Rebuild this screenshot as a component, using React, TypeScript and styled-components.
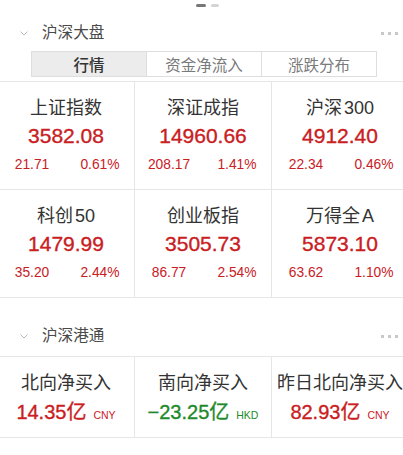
import React from "react";
import styled, { createGlobalStyle } from "styled-components";

const Global = createGlobalStyle`
  html, body { margin: 0; padding: 0; background: #fff; }
  body { font-family: "Liberation Sans", "Noto Sans CJK SC", sans-serif; overflow: hidden; }
`;

const RED = "#c9201f";
const GREEN = "#1e8a2b";

const Page = styled.div`
  width: 403px;
  height: 455px;
  overflow: hidden;
  background: #fff;
`;

const Pager = styled.div`
  height: 20px;
  display: flex;
  justify-content: center;
  align-items: flex-start;
  gap: 5px;
  padding-top: 4px;
  box-sizing: border-box;
  padding-left: 12px;
`;

const PagerDot = styled.span<{ $active?: boolean }>`
  display: block;
  width: ${(p) => (p.$active ? 10 : 8)}px;
  height: 3px;
  border-radius: 2px;
  background: ${(p) => (p.$active ? "#777" : "#d4d4d4")};
`;

const Header = styled.div<{ $top: number }>`
  margin-top: ${(p) => p.$top}px;
  height: 26px;
  display: flex;
  align-items: center;
  padding: 0 5px 0 20px;
`;

const Chevron = styled.svg`
  width: 8px;
  height: 5px;
  margin-right: 14px;
  flex: none;
`;

const Title = styled.div`
  font-size: 15.6px;
  color: #4a4a4a;
  flex: 1;
  line-height: 26px;
`;

const More = styled.div`
  display: flex;
  gap: 4px;
  align-items: center;
`;

const MoreDot = styled.span`
  width: 3px;
  height: 3px;
  background: #c8c8c8;
  display: block;
`;

const Tabs = styled.div`
  margin: 5px 0 0 31px;
  width: 346px;
  height: 26px;
  display: flex;
  border: 1px solid #dedede;
  box-sizing: border-box;
`;

const Tab = styled.div<{ $active?: boolean }>`
  flex: 1;
  display: flex;
  align-items: center;
  justify-content: center;
  font-size: 15.5px;
  color: ${(p) => (p.$active ? "#333" : "#7a7a7a")};
  font-weight: ${(p) => (p.$active ? 500 : 400)};
  background: ${(p) => (p.$active ? "#ececec" : "#fff")};
  & + & { border-left: 1px solid #dedede; }
`;

const Grid = styled.div<{ $top: number }>`
  margin-top: ${(p) => p.$top}px;
  margin-left: -2px;
  width: 411px;
  display: grid;
  grid-template-columns: repeat(3, 137px);
  border-top: 1px solid #e6e6e6;
`;

const Cell = styled.div<{ $pb: number }>`
  border-right: 1px solid #e6e6e6;
  border-bottom: 1px solid #e6e6e6;
  padding: 14px 0 ${(p) => p.$pb}px;
  display: flex;
  flex-direction: column;
  align-items: center;
  min-width: 0;
`;

const Name = styled.div`
  font-size: 18px;
  line-height: 24px;
  color: #333;
  white-space: nowrap;
`;

const Value = styled.div<{ $size: number; $color: string; $mt: number }>`
  font-size: ${(p) => p.$size}px;
  line-height: 26px;
  color: ${(p) => p.$color};
  -webkit-text-stroke: 0.35px ${(p) => p.$color};
  margin-top: ${(p) => p.$mt}px;
  white-space: nowrap;
  display: flex;
  align-items: baseline;
`;

const Unit = styled.span`
  font-size: 10.5px;
  margin-left: 7px;
  -webkit-text-stroke: 0;
`;

const Changes = styled.div`
  margin-top: 7px;
  width: 100%;
  display: grid;
  grid-template-columns: 1fr 1fr;
  font-size: 13.8px;
  line-height: 18px;
  color: ${RED};
  text-align: center;
`;

const indices = [
  { name: "上证指数", value: "3582.08", ch: "21.71", pct: "0.61%" },
  { name: "深证成指", value: "14960.66", ch: "208.17", pct: "1.41%" },
  { name: "沪深300", value: "4912.40", ch: "22.34", pct: "0.46%" },
  { name: "科创50", value: "1479.99", ch: "35.20", pct: "2.44%" },
  { name: "创业板指", value: "3505.73", ch: "86.77", pct: "2.54%" },
  { name: "万得全A", value: "5873.10", ch: "63.62", pct: "1.10%" },
];

const flows = [
  { name: "北向净买入", value: "14.35亿", unit: "CNY", color: RED },
  { name: "南向净买入", value: "−23.25亿", unit: "HKD", color: GREEN },
  { name: "昨日北向净买入", value: "82.93亿", unit: "CNY", color: RED },
];

function SectionHeader({ title, top }: { title: string; top: number }) {
  return (
    <Header $top={top}>
      <Chevron viewBox="0 0 8 5">
        <polyline points="0.5,0.5 4,4 7.5,0.5" fill="none" stroke="#bdbdbd" strokeWidth="1" />
      </Chevron>
      <Title>{title}</Title>
      <More>
        <MoreDot />
        <MoreDot />
        <MoreDot />
      </More>
    </Header>
  );
}

const Latin = styled.span`
  margin-left: 2px;
`;

function splitName(n: string) {
  const m = n.match(/^(.*?)([0-9A-Z]+)$/);
  if (!m) return n;
  return (
    <>
      {m[1]}
      <Latin>{m[2]}</Latin>
    </>
  );
}

export default function App() {
  return (
    <Page>
      <Global />
      <Pager>
        <PagerDot $active />
        <PagerDot />
      </Pager>
      <SectionHeader title="沪深大盘" top={0} />
      <Tabs>
        <Tab $active>行情</Tab>
        <Tab>资金净流入</Tab>
        <Tab>涨跌分布</Tab>
      </Tabs>
      <Grid $top={4}>
        {indices.map((it) => (
          <Cell key={it.name} $pb={15}>
            <Name>{splitName(it.name)}</Name>
            <Value $size={21} $color={RED} $mt={3}>
              {it.value}
            </Value>
            <Changes>
              <span>{it.ch}</span>
              <span>{it.pct}</span>
            </Changes>
          </Cell>
        ))}
      </Grid>
      <SectionHeader title="沪深港通" top={25} />
      <Grid $top={7}>
        {flows.map((f) => (
          <Cell key={f.name} $pb={9}>
            <Name>{f.name}</Name>
            <Value $size={20} $color={f.color} $mt={4}>
              {f.value}
              <Unit>{f.unit}</Unit>
            </Value>
          </Cell>
        ))}
      </Grid>
    </Page>
  );
}
